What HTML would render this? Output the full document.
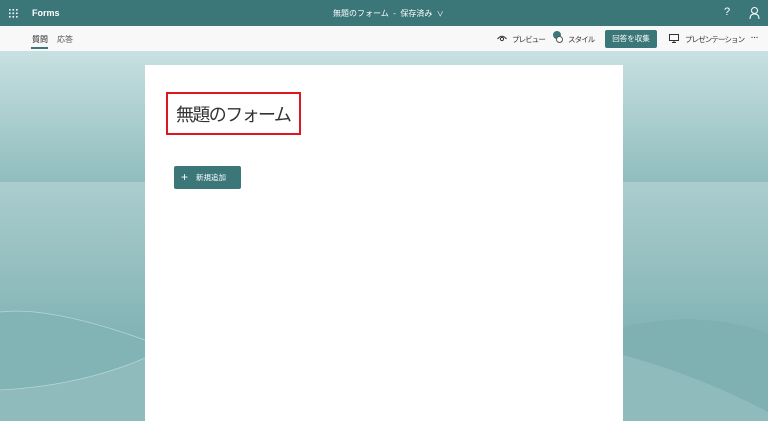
<!DOCTYPE html>
<html><head><meta charset="utf-8"><style>
*{margin:0;padding:0;box-sizing:border-box}
body{width:768px;height:421px;overflow:hidden;font-family:"Liberation Sans","Noto Sans CJK JP",sans-serif;position:relative;background:#fff}
.hd{position:absolute;left:0;top:0;width:768px;height:26px;background:#3b7679;color:#fff}
.tb{position:absolute;left:0;top:26px;width:768px;height:25px;background:#f8f8f8;font-size:7.5px;color:#333}
.tb .t{letter-spacing:-0.9px}
.bg{position:absolute;left:0;top:51px;width:768px;height:370px}
.card{position:absolute;left:145px;top:65px;width:478px;height:360px;background:#fff}
.t{position:absolute;white-space:nowrap}
</style></head><body>
<div class="hd">
 <svg class="t" style="left:9px;top:9px" width="9" height="9"><g fill="#fff"><rect x="0" y="0" width="1.6" height="1.6"/><rect x="3.5" y="0" width="1.6" height="1.6"/><rect x="7" y="0" width="1.6" height="1.6"/><rect x="0" y="3.5" width="1.6" height="1.6"/><rect x="3.5" y="3.5" width="1.6" height="1.6"/><rect x="7" y="3.5" width="1.6" height="1.6"/><rect x="0" y="7" width="1.6" height="1.6"/><rect x="3.5" y="7" width="1.6" height="1.6"/><rect x="7" y="7" width="1.6" height="1.6"/></g></svg>
 <div class="t" style="left:32px;top:8px;font-size:9px;font-weight:bold">Forms</div>
 <div class="t" style="left:333px;top:8px;font-size:8px">無題のフォーム&nbsp; - &nbsp;保存済み&nbsp; <span style="font-size:7px">∨</span></div>
 <div class="t" style="left:724px;top:6px;font-size:11px">?</div>
 <svg class="t" style="left:749px;top:7px" width="11" height="12"><circle cx="5.5" cy="3.5" r="3" fill="none" stroke="#fff" stroke-width="1"/><path d="M1 12 Q1 7 5.5 7 Q10 7 10 12" fill="none" stroke="#fff" stroke-width="1"/></svg>
</div>
<div class="tb">
 <div class="t" style="left:32px;top:8px;color:#222;font-size:8px;letter-spacing:0">質問</div>
 <div style="position:absolute;left:31px;top:21px;width:17px;height:2px;background:#3b7679"></div>
 <div class="t" style="left:57px;top:8px;color:#555;font-size:8px;letter-spacing:0">応答</div>
 <svg class="t" style="left:497px;top:9px" width="10" height="7"><path d="M0.5 4 Q5 -1.5 9.5 4" fill="none" stroke="#333"/><circle cx="5" cy="4" r="1.6" fill="none" stroke="#333"/></svg>
 <div class="t" style="left:512px;top:8px">プレビュー</div>
 <div style="position:absolute;left:553px;top:5px;width:8px;height:8px;border-radius:50%;background:#3b7679"></div>
 <div style="position:absolute;left:556px;top:10px;width:7px;height:7px;border-radius:50%;border:1px solid #555;background:#fff"></div>
 <div class="t" style="left:568px;top:8px">スタイル</div>
 <div style="position:absolute;left:605px;top:4px;width:52px;height:18px;background:#3b7679;border-radius:2px;color:#fff;font-size:7.5px;text-align:center;line-height:18px">回答を収集</div>
 <svg class="t" style="left:669px;top:8px" width="10" height="9"><rect x="0.5" y="0.5" width="9" height="6" fill="none" stroke="#333"/><path d="M5 7v2M3 8.5h4" stroke="#333"/></svg>
 <div class="t" style="left:685px;top:8px">プレゼンテーション</div>
 <div class="t" style="left:751px;top:7px;font-weight:bold;letter-spacing:0">···</div>
</div>
<svg class="bg" width="768" height="370">
 <defs>
  <linearGradient id="a" x1="0" y1="0" x2="0" y2="1"><stop offset="0" stop-color="#c8e0e1"/><stop offset="1" stop-color="#90bdbe"/></linearGradient>
  <linearGradient id="b" x1="0" y1="0" x2="0" y2="1"><stop offset="0" stop-color="#abcdce"/><stop offset="1" stop-color="#6ca5a7"/></linearGradient>
 </defs>
 <rect x="0" y="0" width="768" height="131" fill="url(#a)"/>
 <rect x="0" y="131" width="768" height="239" fill="url(#b)"/>
 <path d="M0 261 Q50 255 145 289 L145 370 L0 370 Z" fill="#82b3b5"/>
 <path d="M0 261 Q50 255 145 289" fill="none" stroke="#b6d5d6" stroke-width="0.8"/>
 <path d="M0 339 Q80 335 145 307 L145 370 L0 370 Z" fill="#8fbbbc"/>
 <path d="M0 339 Q80 335 145 307" fill="none" stroke="#b6d5d6" stroke-width="0.8"/>
 <path d="M623 276 Q700 258 768 282 L768 370 L623 370 Z" fill="#7fb0b2"/>
 <path d="M623 304 Q700 325 768 361 L768 370 L623 370 Z" fill="#8fbbbc"/>
</svg>
<div class="card"></div>
<div style="position:absolute;left:166px;top:92px;width:135px;height:43px;border:2px solid #e0161f"></div>
<div class="t" style="left:176px;top:101px;font-size:18px;letter-spacing:-1.6px;color:#333">無題のフォーム</div>
<div style="position:absolute;left:174px;top:166px;width:67px;height:23px;background:#3b7679;border-radius:2px;color:#fff;font-size:8px;line-height:23px"><span style="font-size:12px;position:absolute;left:7px;top:0">+</span><span style="position:absolute;left:22px;font-size:7.5px">新規追加</span></div>
</body></html>
